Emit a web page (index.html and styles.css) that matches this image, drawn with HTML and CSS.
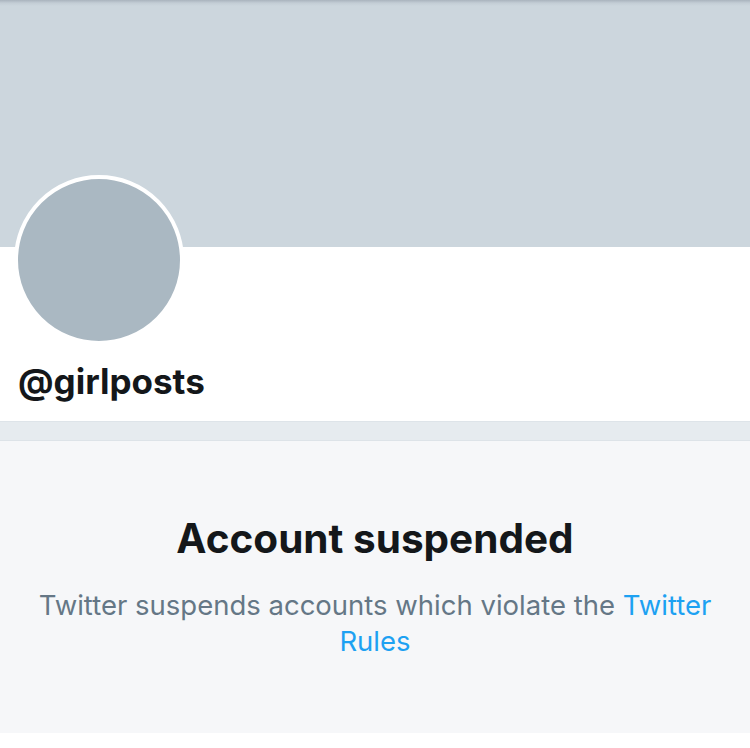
FILE: index.html
```html
<!DOCTYPE html>
<html>
<head>
<meta charset="utf-8">
<link rel="stylesheet" href="styles.css">
</head>
<body>
<div class="page">
  <div class="banner"></div>
  <div class="profile">
    <div class="avatar"></div>
    <div class="handle">@girlposts</div>
  </div>
  <div class="separator"></div>
  <div class="suspended">
    <h1 class="title">Account suspended</h1>
    <p class="desc">Twitter suspends accounts which violate the <a class="link" href="#">Twitter Rules</a></p>
  </div>
</div>
</body>
</html>
```
FILE: styles.css
```css
html, body {
  margin: 0;
  padding: 0;
  background: #ffffff;
}
.page {
  width: 750px;
  font-family: Inter, "Liberation Sans", sans-serif;
}
.banner {
  height: 247px;
  background: linear-gradient(to bottom, #a9b3bd 0px, #c3cdd5 3px, #ccd6dd 6px, #ccd6dd 100%);
}
.profile {
  display: flow-root;
  height: 174px;
  background: #ffffff;
  padding-left: 14px;
  box-sizing: border-box;
}
.avatar {
  width: 162px;
  height: 162px;
  border-radius: 50%;
  background: #aab8c2;
  border: 4px solid #ffffff;
  margin-top: -72px;
}
.handle {
  margin-top: 15px;
  margin-left: 4px;
  font-size: 35px;
  font-weight: 700;
  color: #14171a;
  line-height: 42px;
}
.separator {
  height: 20px;
  background: #e6ebef;
  border-top: 1px solid #dee4e9;
  border-bottom: 1px solid #dde3e8;
  box-sizing: border-box;
}
.suspended {
  height: 292px;
  background: #f6f7f9;
  padding: 74px 36px 0;
  box-sizing: border-box;
  text-align: center;
}
.title {
  margin: 0;
  font-size: 40.5px;
  font-weight: 700;
  line-height: 48px;
  color: #14171a;
}
.desc {
  margin: 24px 0 0;
  font-size: 27.5px;
  line-height: 36px;
  color: #657786;
  font-weight: 400;
}
.link {
  color: #1da1f2;
  text-decoration: none;
}
```
